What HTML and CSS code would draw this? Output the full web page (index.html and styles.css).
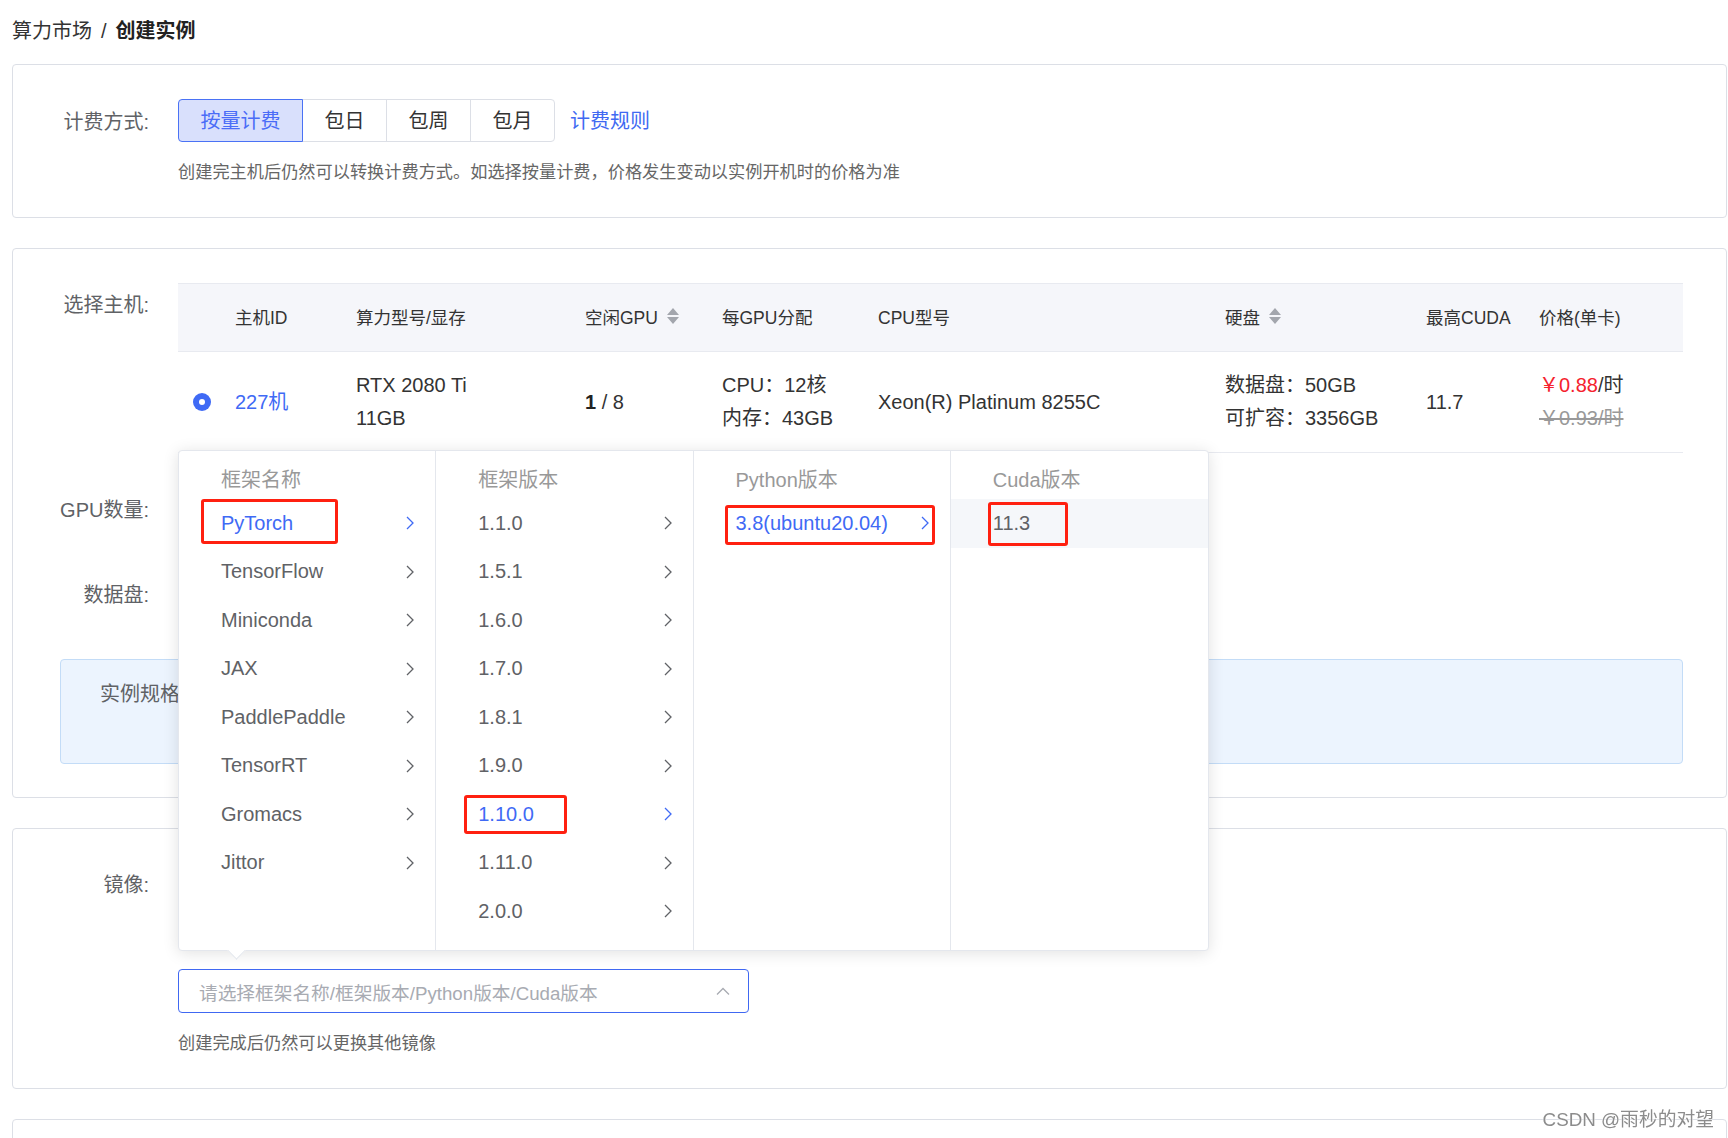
FILE: index.html
```html
<!DOCTYPE html>
<html lang="zh-CN">
<head>
<meta charset="utf-8">
<title>创建实例</title>
<link rel="stylesheet" href="styles.css">
</head>
<body>
<div class="page">
  <div class="crumb"><span class="crumb-parent">算力市场</span><span class="crumb-sep">/</span><span class="crumb-cur">创建实例</span></div>

  <section class="card">
    <div class="form-row">
      <div class="label label-43">计费方式:</div>
      <div class="field">
        <div class="billing-line">
          <div class="btn-group">
            <span class="seg seg-wide seg-active">按量计费</span>
            <span class="seg">包日</span>
            <span class="seg">包周</span>
            <span class="seg">包月</span>
          </div>
          <a class="link">计费规则</a>
        </div>
        <div class="hint">创建完主机后仍然可以转换计费方式。如选择按量计费，价格发生变动以实例开机时的价格为准</div>
      </div>
    </div>
  </section>

  <section class="card">
    <div class="form-row">
      <div class="label">选择主机:</div>
      <div class="field">
        <div class="tbl">
          <div class="tbl-head">
            <div></div>
            <div>主机ID</div>
            <div>算力型号/显存</div>
            <div class="th-sort">空闲GPU<svg class="sort" viewBox="0 0 14 18" width="14" height="18"><path d="M7 1L13 8H1Z M1 10H13L7 17Z" fill="#a3a6ad"/></svg></div>
            <div>每GPU分配</div>
            <div>CPU型号</div>
            <div class="th-sort">硬盘<svg class="sort" viewBox="0 0 14 18" width="14" height="18"><path d="M7 1L13 8H1Z M1 10H13L7 17Z" fill="#a3a6ad"/></svg></div>
            <div>最高CUDA</div>
            <div>价格(单卡)</div>
          </div>
          <div class="tbl-row">
            <div><span class="radio"></span></div>
            <div class="blue">227机</div>
            <div>RTX 2080 Ti<br>11GB</div>
            <div><b>1</b> / 8</div>
            <div>CPU：12核<br>内存：43GB</div>
            <div>Xeon(R) Platinum 8255C</div>
            <div>数据盘：50GB<br>可扩容：3356GB</div>
            <div>11.7</div>
            <div><span class="red">￥0.88</span>/时<br><s class="old">￥0.93/时</s></div>
          </div>
        </div>
      </div>
    </div>
    <div class="form-row row-gpu">
      <div class="label">GPU数量:</div>
      <div class="field"></div>
    </div>
    <div class="form-row row-disk">
      <div class="label">数据盘:</div>
      <div class="field"></div>
    </div>
    <div class="spec">实例规格：</div>
  </section>

  <section class="card">
    <div class="form-row">
      <div class="label">镜像:</div>
      <div class="field">
        <div class="image-type"></div>
        <div class="select">
          <span>请选择框架名称/框架版本/Python版本/Cuda版本</span>
          <svg class="up" viewBox="0 0 14 8" width="14" height="8"><path d="M1 7.5L7 1.5L13 7.5" fill="none" stroke="#a8abb2" stroke-width="1.3"/></svg>
        </div>
        <div class="hint">创建完成后仍然可以更换其他镜像</div>
      </div>
    </div>
  </section>

  <section class="card card-last"></section>

  <div class="cascader">
    <div class="col">
      <div class="col-title">框架名称</div>
      <div class="item active">PyTorch<svg class="chev" viewBox="0 0 10 16" width="10" height="16"><path d="M2 2L8 8L2 14" fill="none" stroke="currentColor" stroke-width="1.3"/></svg></div>
      <div class="item">TensorFlow<svg class="chev" viewBox="0 0 10 16" width="10" height="16"><path d="M2 2L8 8L2 14" fill="none" stroke="currentColor" stroke-width="1.3"/></svg></div>
      <div class="item">Miniconda<svg class="chev" viewBox="0 0 10 16" width="10" height="16"><path d="M2 2L8 8L2 14" fill="none" stroke="currentColor" stroke-width="1.3"/></svg></div>
      <div class="item">JAX<svg class="chev" viewBox="0 0 10 16" width="10" height="16"><path d="M2 2L8 8L2 14" fill="none" stroke="currentColor" stroke-width="1.3"/></svg></div>
      <div class="item">PaddlePaddle<svg class="chev" viewBox="0 0 10 16" width="10" height="16"><path d="M2 2L8 8L2 14" fill="none" stroke="currentColor" stroke-width="1.3"/></svg></div>
      <div class="item">TensorRT<svg class="chev" viewBox="0 0 10 16" width="10" height="16"><path d="M2 2L8 8L2 14" fill="none" stroke="currentColor" stroke-width="1.3"/></svg></div>
      <div class="item">Gromacs<svg class="chev" viewBox="0 0 10 16" width="10" height="16"><path d="M2 2L8 8L2 14" fill="none" stroke="currentColor" stroke-width="1.3"/></svg></div>
      <div class="item">Jittor<svg class="chev" viewBox="0 0 10 16" width="10" height="16"><path d="M2 2L8 8L2 14" fill="none" stroke="currentColor" stroke-width="1.3"/></svg></div>
    </div>
    <div class="col">
      <div class="col-title">框架版本</div>
      <div class="item">1.1.0<svg class="chev" viewBox="0 0 10 16" width="10" height="16"><path d="M2 2L8 8L2 14" fill="none" stroke="currentColor" stroke-width="1.3"/></svg></div>
      <div class="item">1.5.1<svg class="chev" viewBox="0 0 10 16" width="10" height="16"><path d="M2 2L8 8L2 14" fill="none" stroke="currentColor" stroke-width="1.3"/></svg></div>
      <div class="item">1.6.0<svg class="chev" viewBox="0 0 10 16" width="10" height="16"><path d="M2 2L8 8L2 14" fill="none" stroke="currentColor" stroke-width="1.3"/></svg></div>
      <div class="item">1.7.0<svg class="chev" viewBox="0 0 10 16" width="10" height="16"><path d="M2 2L8 8L2 14" fill="none" stroke="currentColor" stroke-width="1.3"/></svg></div>
      <div class="item">1.8.1<svg class="chev" viewBox="0 0 10 16" width="10" height="16"><path d="M2 2L8 8L2 14" fill="none" stroke="currentColor" stroke-width="1.3"/></svg></div>
      <div class="item">1.9.0<svg class="chev" viewBox="0 0 10 16" width="10" height="16"><path d="M2 2L8 8L2 14" fill="none" stroke="currentColor" stroke-width="1.3"/></svg></div>
      <div class="item active">1.10.0<svg class="chev" viewBox="0 0 10 16" width="10" height="16"><path d="M2 2L8 8L2 14" fill="none" stroke="currentColor" stroke-width="1.3"/></svg></div>
      <div class="item">1.11.0<svg class="chev" viewBox="0 0 10 16" width="10" height="16"><path d="M2 2L8 8L2 14" fill="none" stroke="currentColor" stroke-width="1.3"/></svg></div>
      <div class="item">2.0.0<svg class="chev" viewBox="0 0 10 16" width="10" height="16"><path d="M2 2L8 8L2 14" fill="none" stroke="currentColor" stroke-width="1.3"/></svg></div>
    </div>
    <div class="col">
      <div class="col-title">Python版本</div>
      <div class="item active">3.8(ubuntu20.04)<svg class="chev" viewBox="0 0 10 16" width="10" height="16"><path d="M2 2L8 8L2 14" fill="none" stroke="currentColor" stroke-width="1.3"/></svg></div>
    </div>
    <div class="col">
      <div class="col-title">Cuda版本</div>
      <div class="item hovered">11.3</div>
    </div>
    <span class="mark mark-pytorch"></span>
    <span class="mark mark-ver"></span>
    <span class="mark mark-py"></span>
    <span class="mark mark-cuda"></span>
  </div>

  <div class="watermark">CSDN @雨秒的对望</div>
</div>
</body>
</html>
```

FILE: styles.css
```css
* { box-sizing: border-box; }
html, body { margin: 0; padding: 0; background: #fff; overflow: hidden; }
body {
  font-family: "Liberation Sans", "Noto Sans CJK SC", sans-serif;
  color: #333;
  width: 1728px;
  height: 1138px;
}
.page { position: relative; padding: 0 1px 0 12px; }

.crumb { height: 64px; line-height: 62px; font-size: 20px; color: #333; }
.crumb-sep { margin: 0 9px; }
.crumb-cur { font-weight: 700; color: #222; }

.card {
  border: 1px solid #dcdfe6;
  border-radius: 4px;
  background: #fff;
  padding: 34px 43px 33px 0;
  margin-bottom: 30px;
}
.card-last { height: 220px; }

.form-row { display: flex; align-items: flex-start; }
.label {
  width: 136px;
  flex: none;
  text-align: right;
  font-size: 20px;
  line-height: 44px;
  color: #606266;
  margin-right: 29px;
}
.label-43 { line-height: 43px; padding-top: 2px; }
.field { flex: 1; min-width: 0; }

.billing-line { display: flex; align-items: center; height: 43px; }
.btn-group { display: flex; }
.seg {
  width: 85px;
  height: 43px;
  line-height: 43px;
  text-align: center;
  border: 1px solid #dcdfe6;
  margin-left: -1px;
  font-size: 20px;
  color: #333;
  position: relative;
}
.seg:first-child { margin-left: 0; border-radius: 4px 0 0 4px; }
.seg:last-child { border-radius: 0 4px 4px 0; }
.seg-wide { width: 125px; }
.seg-active { background: #d9e0fc; border-color: #4a72f5; color: #4a6cf7; z-index: 1; }
.link { margin-left: 15px; font-size: 20px; color: #4069f2; line-height: 43px; position: relative; top: 1px; }

.hint { margin-top: 18px; font-size: 17.2px; line-height: 24px; color: #666; }

/* table */
.tbl-head, .tbl-row {
  display: grid;
  grid-template-columns: 57px 121px 229px 137px 156px 347px 201px 113px 1fr;
  align-items: center;
}
.tbl-head {
  height: 69px;
  padding-bottom: 3px;
  background: #f5f6fa;
  border-top: 1px solid #e8eaf0;
  border-bottom: 1px solid #e8eaf0;
  font-size: 17.5px;
  color: #333;
}
.th-sort { display: flex; align-items: center; }
.sort { margin-left: 8px; }
.tbl-row {
  height: 101px;
  border-bottom: 1px solid #e8eaf0;
  font-size: 20px;
  line-height: 33px;
  color: #333;
}
.tbl-row b { font-weight: 700; color: #222; }
.radio {
  display: block;
  width: 18px;
  height: 18px;
  margin-left: 15px;
  border-radius: 50%;
  background: #3f6af5;
  position: relative;
}
.radio::after {
  content: "";
  position: absolute;
  left: 6px;
  top: 6px;
  width: 6px;
  height: 6px;
  border-radius: 50%;
  background: #fff;
}
.blue { color: #3f6af5; }
.red { color: #f5222d; }
.old { color: #999; }

.row-gpu { margin-top: 35px; }
.row-disk { margin-top: 41px; }
.spec {
  margin: 42px 0 0 47px;
  height: 105px;
  border: 1px solid #c3dcf7;
  border-radius: 4px;
  background: #ecf4fe;
  padding: 22px 39px;
  font-size: 20px;
  line-height: 24px;
  color: #606266;
}

/* image select */
.image-type { height: 44px; }
.select {
  margin-top: 62px;
  width: 571px;
  height: 44px;
  border: 1px solid #4068f2;
  border-radius: 4px;
  display: flex;
  align-items: center;
  justify-content: space-between;
  padding: 0 18px 0 20px;
  font-size: 18.7px;
  color: #a8abb2;
}

/* cascader dropdown */
.cascader {
  position: absolute;
  left: 178px;
  top: 450px;
  width: 1031px;
  height: 501px;
  background: #fff;
  border: 1px solid #e4e7ed;
  border-radius: 4px;
  box-shadow: 0 2px 16px rgba(0, 0, 0, 0.12);
  display: grid;
  grid-template-columns: repeat(4, 1fr);
  z-index: 10;
}
.cascader::after {
  content: "";
  position: absolute;
  left: 51px;
  bottom: -7px;
  width: 12px;
  height: 12px;
  background: #fff;
  border-right: 1px solid #e4e7ed;
  border-bottom: 1px solid #e4e7ed;
  transform: rotate(45deg);
}
.col { border-right: 1px solid #e4e7ed; }
.col:nth-child(4) { border-right: none; }
.col-title {
  height: 48px;
  padding: 12px 0 0 42px;
  line-height: 34px;
  font-size: 20px;
  color: #999;
}
.item {
  height: 48.5px;
  display: flex;
  align-items: center;
  justify-content: space-between;
  padding: 0 20px 0 42px;
  font-size: 20px;
  color: #606266;
}
.item.active { color: #3f6af5; }
.item.hovered { background: #f5f7fa; }
.chev { flex: none; }

.mark {
  position: absolute;
  border: 3.5px solid #ff2010;
  border-radius: 3px;
  pointer-events: none;
}
.mark-pytorch { left: 21.5px; top: 48px; width: 137.5px; height: 45px; }
.mark-ver { left: 285px; top: 343.5px; width: 102.5px; height: 39.5px; }
.mark-py { left: 546px; top: 53.5px; width: 209.5px; height: 40px; }
.mark-cuda { left: 808.5px; top: 50.5px; width: 80.5px; height: 44px; }

.watermark {
  position: fixed;
  right: 14px;
  bottom: 6px;
  font-size: 18.8px;
  line-height: 24px;
  color: #8c8c8c;
  text-shadow: 0 0 2px #fff, 0 0 1px #fff;
  z-index: 20;
}
```
